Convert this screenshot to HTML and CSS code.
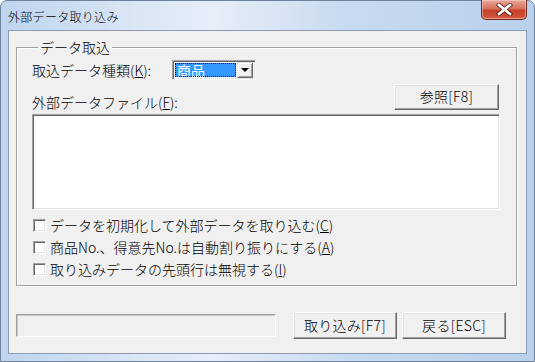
FILE: index.html
```html
<!DOCTYPE html>
<html lang="ja">

<head>
    <meta charset="UTF-8">
    <title>外部データ取り込み</title>
    <link rel="stylesheet" href="styles.css">
</head>

<body>
    <div class="window">
        <div class="titlebar">
            <span class="title">外部データ取り込み</span>
            <div class="close-btn">
                <svg width="17" height="13" viewBox="0 0 17 13">
                    <path d="M3 2 L14 11 M14 2 L3 11" stroke="#3a1810" stroke-width="4.4" stroke-linecap="square" fill="none" opacity="0.75"/>
                    <path d="M3 2 L14 11 M14 2 L3 11" stroke="#fff" stroke-width="2.6" stroke-linecap="square" fill="none"/>
                </svg>
            </div>
        </div>

        <div class="client">
            <fieldset class="group">
                <legend>データ取込</legend>

                <div class="row kind-row">
                    <span class="lbl">取込データ種類(<u>K</u>):</span>
                    <div class="combo">
                        <div class="combo-value">商品</div>
                        <div class="combo-arrow"><i></i></div>
                    </div>
                </div>

                <div class="row file-row">
                    <span class="lbl">外部データファイル(<u>F</u>):</span>
                    <div class="btn ref-btn">参照[F8]</div>
                </div>

                <div class="filebox"></div>

                <div class="checks">
                    <label class="check"><span class="box"></span>データを初期化して外部データを取り込む(<u>C</u>)</label>
                    <label class="check"><span class="box"></span>商品No.、得意先No.は自動割り振りにする(<u>A</u>)</label>
                    <label class="check"><span class="box"></span>取り込みデータの先頭行は無視する(<u>I</u>)</label>
                </div>
            </fieldset>

            <div class="footer">
                <div class="status"></div>
                <div class="btn import-btn">取り込み[F7]</div>
                <div class="btn back-btn">戻る[ESC]</div>
            </div>
        </div>
    </div>
</body>

</html>
```

FILE: styles.css
```css
* {
    box-sizing: border-box;
}

body {
    margin: 0;
    background-color: #fff;
    font-family: "Noto Sans CJK JP", sans-serif;
    font-weight: 300;
    color: #000;
}

.window {
    width: 535px;
    height: 362px;
    border: 1px solid #6f829b;
    border-radius: 7px 7px 0 0;
    background: linear-gradient(to right, #bfd4ee 0%, #d9e6f4 25%, #e6eef8 40%, #c8daef 65%, #b9d0ec 100%);
    display: flex;
    flex-direction: column;
}

.titlebar {
    height: 29px;
    display: flex;
    justify-content: space-between;
    align-items: flex-start;
}

.title {
    font-size: 12px;
    line-height: 16px;
    margin: 8px 0 0 7px;
    letter-spacing: 0.3px;
}

.close-btn {
    width: 46px;
    height: 20px;
    margin: -1px 7px 0 0;
    border: 1px solid #6b2b21;
    border-top: none;
    border-radius: 0 0 5px 5px;
    background: linear-gradient(#e9a899 0%, #d8725d 45%, #c44128 55%, #d5593f 100%);
    box-shadow: inset 0 0 0 1px rgba(255, 220, 210, 0.5);
    display: flex;
    justify-content: center;
    align-items: center;
}

.client {
    height: 324px;
    margin: 0 7px;
    border: 1px solid #8a9db6;
    background-color: #f0f0f0;
    display: flex;
    flex-direction: column;
    font-size: 14px;
}

u {
    text-decoration: underline;
}

.group {
    width: 501px;
    margin: 8px 0 0 7px;
    padding: 5px 16px 5px 15px;
    border: 1px solid #a0a0a0;
    box-shadow: inset 1px 1px #fff, 1px 1px #fff;
    min-width: 0;
}

.group legend {
    padding: 0 2px;
    margin-left: 6px;
    line-height: 16px;
    background-color: #f0f0f0;
}

.row {
    display: flex;
}

.lbl {
    line-height: 16px;
}

.kind-row {
    height: 20px;
    align-items: center;
}

.kind-row .lbl {
    width: 140px;
}

.combo {
    width: 84px;
    height: 20px;
    border: 1px solid;
    border-color: #a0a0a0 #fff #fff #a0a0a0;
    box-shadow: inset 1px 1px #696969, inset -1px -1px #e3e3e3;
    background-color: #fff;
    padding: 1px 2px;
    display: flex;
}

.combo-value {
    flex: 1;
    margin: 1px 0;
    background-color: #3399ff;
    outline: 1px dotted #000;
    outline-offset: -1px;
    color: #fff;
    font-size: 14px;
    font-weight: 400;
    line-height: 15px;
    padding-left: 2px;
    white-space: nowrap;
}

.combo-arrow {
    width: 16px;
    margin-left: 1px;
    background-color: #f0f0f0;
    border: 1px solid;
    border-color: #e3e3e3 #696969 #696969 #e3e3e3;
    box-shadow: inset 1px 1px #fff, inset -1px -1px #a0a0a0;
    display: flex;
    justify-content: center;
    align-items: center;
}

.combo-arrow i {
    width: 0;
    height: 0;
    border-left: 4px solid transparent;
    border-right: 4px solid transparent;
    border-top: 4px solid #000;
}

.file-row {
    margin-top: 4px;
    justify-content: space-between;
    align-items: flex-end;
}

.btn {
    height: 26px;
    background-color: #f0f0f0;
    border: 1px solid;
    border-color: #fff #696969 #696969 #fff;
    box-shadow: inset -1px -1px #a0a0a0, inset 1px 1px #e3e3e3;
    text-align: center;
    line-height: 23px;
    letter-spacing: 0.3px;
}

.ref-btn {
    width: 105px;
    margin-right: 1px;
}

.filebox {
    height: 96px;
    margin-top: 4px;
    background-color: #fff;
    border: 1px solid;
    border-color: #a0a0a0 #fff #fff #a0a0a0;
    box-shadow: inset 1px 1px #696969, inset -1px -1px #e3e3e3;
}

.checks {
    margin-top: 4px;
    display: flex;
    flex-direction: column;
}

.check {
    height: 22px;
    display: flex;
    align-items: center;
}

.box {
    width: 13px;
    height: 13px;
    margin: 0 4px 0 1px;
    background-color: #fff;
    border: 1px solid;
    border-color: #a0a0a0 #fff #fff #a0a0a0;
    box-shadow: inset 1px 1px #696969, inset -1px -1px #e3e3e3;
}

.footer {
    margin-top: auto;
    margin-left: 7px;
    padding-bottom: 14px;
    display: flex;
    align-items: center;
}

.status {
    width: 260px;
    height: 23px;
    border: 1px solid;
    border-color: #a0a0a0 #fff #fff #a0a0a0;
    box-shadow: inset 1px 1px #c8c8c8;
}

.import-btn {
    width: 104px;
    height: 27px;
    margin-left: 17px;
    line-height: 24px;
}

.back-btn {
    width: 104px;
    height: 27px;
    margin-left: 5px;
    line-height: 24px;
}
```
